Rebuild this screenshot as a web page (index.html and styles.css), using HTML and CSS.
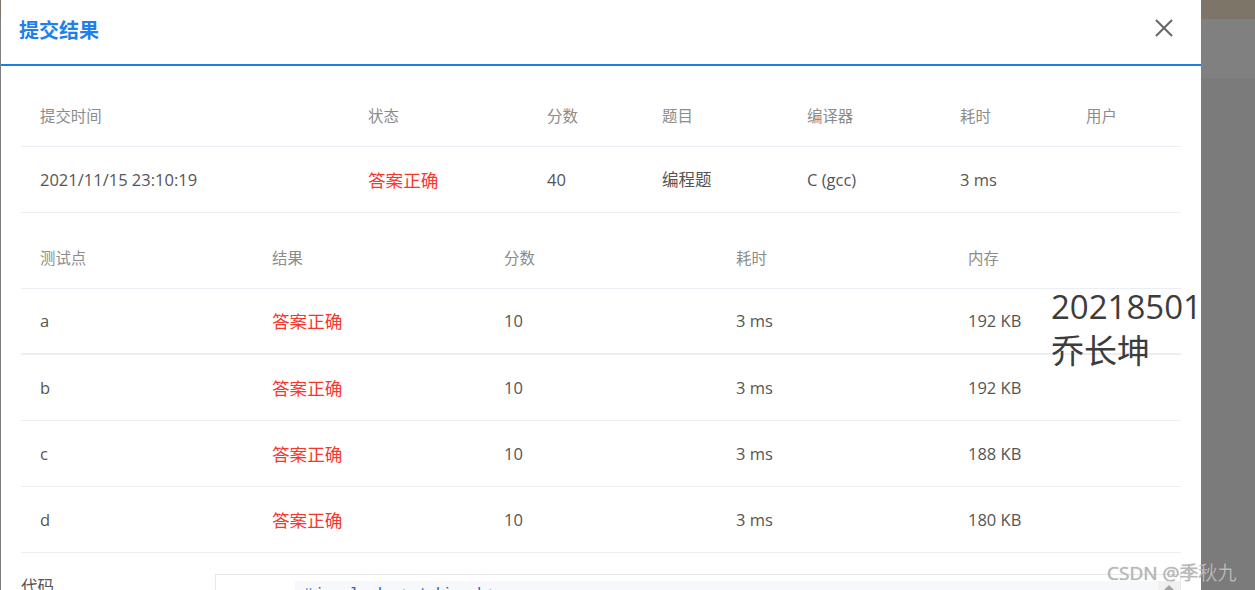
FILE: index.html
```html
<!DOCTYPE html>
<html lang="zh">
<head>
<meta charset="utf-8">
<title>提交结果</title>
<link rel="stylesheet" href="styles.css">
</head>
<body>
<div class="dialog">
  <div class="dialog-header">
    <div class="title">提交结果</div>
    <svg class="close" viewBox="0 0 18 18" width="18" height="18"><path d="M1 1 L17 17 M17 1 L1 17" stroke="#666" stroke-width="2" fill="none"/></svg>
  </div>
  <div class="dialog-body">
    <div class="table t1">
      <div class="row head">
        <div>提交时间</div><div>状态</div><div>分数</div><div>题目</div><div>编译器</div><div>耗时</div><div>用户</div>
      </div>
      <div class="row">
        <div>2021/11/15 23:10:19</div><div class="ok">答案正确</div><div>40</div><div>编程题</div><div>C (gcc)</div><div>3 ms</div><div></div>
      </div>
    </div>
    <div class="table t2">
      <div class="row head">
        <div>测试点</div><div>结果</div><div>分数</div><div>耗时</div><div>内存</div>
      </div>
      <div class="row thick">
        <div>a</div><div class="ok">答案正确</div><div>10</div><div>3 ms</div><div>192 KB</div>
      </div>
      <div class="row">
        <div>b</div><div class="ok">答案正确</div><div>10</div><div>3 ms</div><div>192 KB</div>
      </div>
      <div class="row">
        <div>c</div><div class="ok">答案正确</div><div>10</div><div>3 ms</div><div>188 KB</div>
      </div>
      <div class="row">
        <div>d</div><div class="ok">答案正确</div><div>10</div><div>3 ms</div><div>180 KB</div>
      </div>
    </div>
    <div class="code-section">
      <div class="code-label">代码</div>
      <div class="code-box">
        <div class="gutter">1</div>
        <div class="code-lines">#include&lt;stdio.h&gt;</div>
        <div class="scrollbar"><span class="arrow"></span></div>
      </div>
    </div>
  </div>
</div>
<div class="name-overlay">20218501<br>乔长坤</div>
<div class="watermark">CSDN @季秋九</div>
</body>
</html>
```

FILE: styles.css
```css
html, body {
  margin: 0;
  padding: 0;
  height: 590px;
  overflow: hidden;
}
body {
  background: linear-gradient(to bottom, #7d7567 0, #7d7567 19px, #808080 19px, #808080 78px, #7b7b7b 78px);
  font-family: "Open Sans", "Noto Sans CJK SC", sans-serif;
  position: relative;
}
.dialog {
  margin-left: 1px;
  width: 1200px;
  height: 590px;
  background: #fff;
  overflow: hidden;
}
.dialog-header {
  box-sizing: border-box;
  height: 66px;
  padding: 16px 28px 0 18px;
  display: flex;
  justify-content: space-between;
  align-items: flex-start;
  border-bottom: 2px solid #1b7fe8;
}
.title {
  font-family: "Noto Sans CJK SC", sans-serif;
  font-size: 20px;
  font-weight: bold;
  line-height: 27px;
  color: #1e80ea;
}
.close {
  margin-top: 3px;
  display: block;
}
.dialog-body {
  padding: 22px 20px 0 20px;
}
.table {
  color: #555;
}
.row {
  display: grid;
  height: 66px;
  box-sizing: border-box;
  border-bottom: 1px solid #ebeef5;
  align-items: center;
  font-size: 16.5px;
  padding-bottom: 1px;
}
.row > div {
  padding-left: 19px;
  white-space: nowrap;
}
.row.head {
  height: 59px;
  font-size: 15.4px;
  color: #8c8c8c;
  padding-bottom: 3px;
}
.t1 .row {
  grid-template-columns: 328px 179px 115px 145px 153px 126px 115px;
}
.t2 {
  margin-top: 17px;
}
.t2 .row {
  grid-template-columns: repeat(5, 1fr);
}
.t2 .row.thick {
  border-bottom: 2px solid #eceef2;
}
.ok {
  color: #f5372c;
  font-size: 17.6px;
  font-family: "Noto Sans CJK SC", sans-serif;
}
.code-section {
  display: flex;
  margin-top: 21px;
}
.code-label {
  width: 194px;
  flex: none;
  font-size: 16.5px;
  color: #555;
  line-height: 24px;
  font-family: "Noto Sans CJK SC", sans-serif;
}
.code-box {
  flex: 1;
  height: 60px;
  border: 1px solid #e6e8ec;
  display: flex;
}
.gutter {
  width: 79px;
  flex: none;
  text-align: right;
  padding-right: 35px;
  box-sizing: border-box;
  padding-top: 14px;
  font-family: "Liberation Mono", monospace;
  font-size: 14px;
  color: #999;
}
.code-lines {
  flex: 1;
  margin-top: 6px;
  background: #f6f8fb;
  padding: 5px 0 0 8px;
  font-family: "Liberation Mono", monospace;
  font-size: 16px;
  color: #2a62c9;
  letter-spacing: 2px;
}
.scrollbar {
  width: 22px;
  flex: none;
  margin-top: 6px;
  background: #f0f0f0;
  position: relative;
}
.arrow {
  position: absolute;
  left: 6px;
  top: 4px;
  width: 0;
  height: 0;
  border-left: 5px solid transparent;
  border-right: 5px solid transparent;
  border-bottom: 5px solid #a3a3a3;
}
.name-overlay {
  position: absolute;
  left: 1051px;
  top: 285px;
  font-size: 33px;
  line-height: 44px;
  color: #3c3c3c;
  font-family: "Open Sans", "Noto Sans CJK SC", sans-serif;
}
.watermark {
  position: absolute;
  left: 1107px;
  top: 558px;
  font-size: 19px;
  color: #b8b8b8;
  text-shadow: 0 0 1px rgba(90, 90, 90, 0.5);
  font-family: "Open Sans", "Noto Sans CJK SC", sans-serif;
  white-space: nowrap;
}
```
